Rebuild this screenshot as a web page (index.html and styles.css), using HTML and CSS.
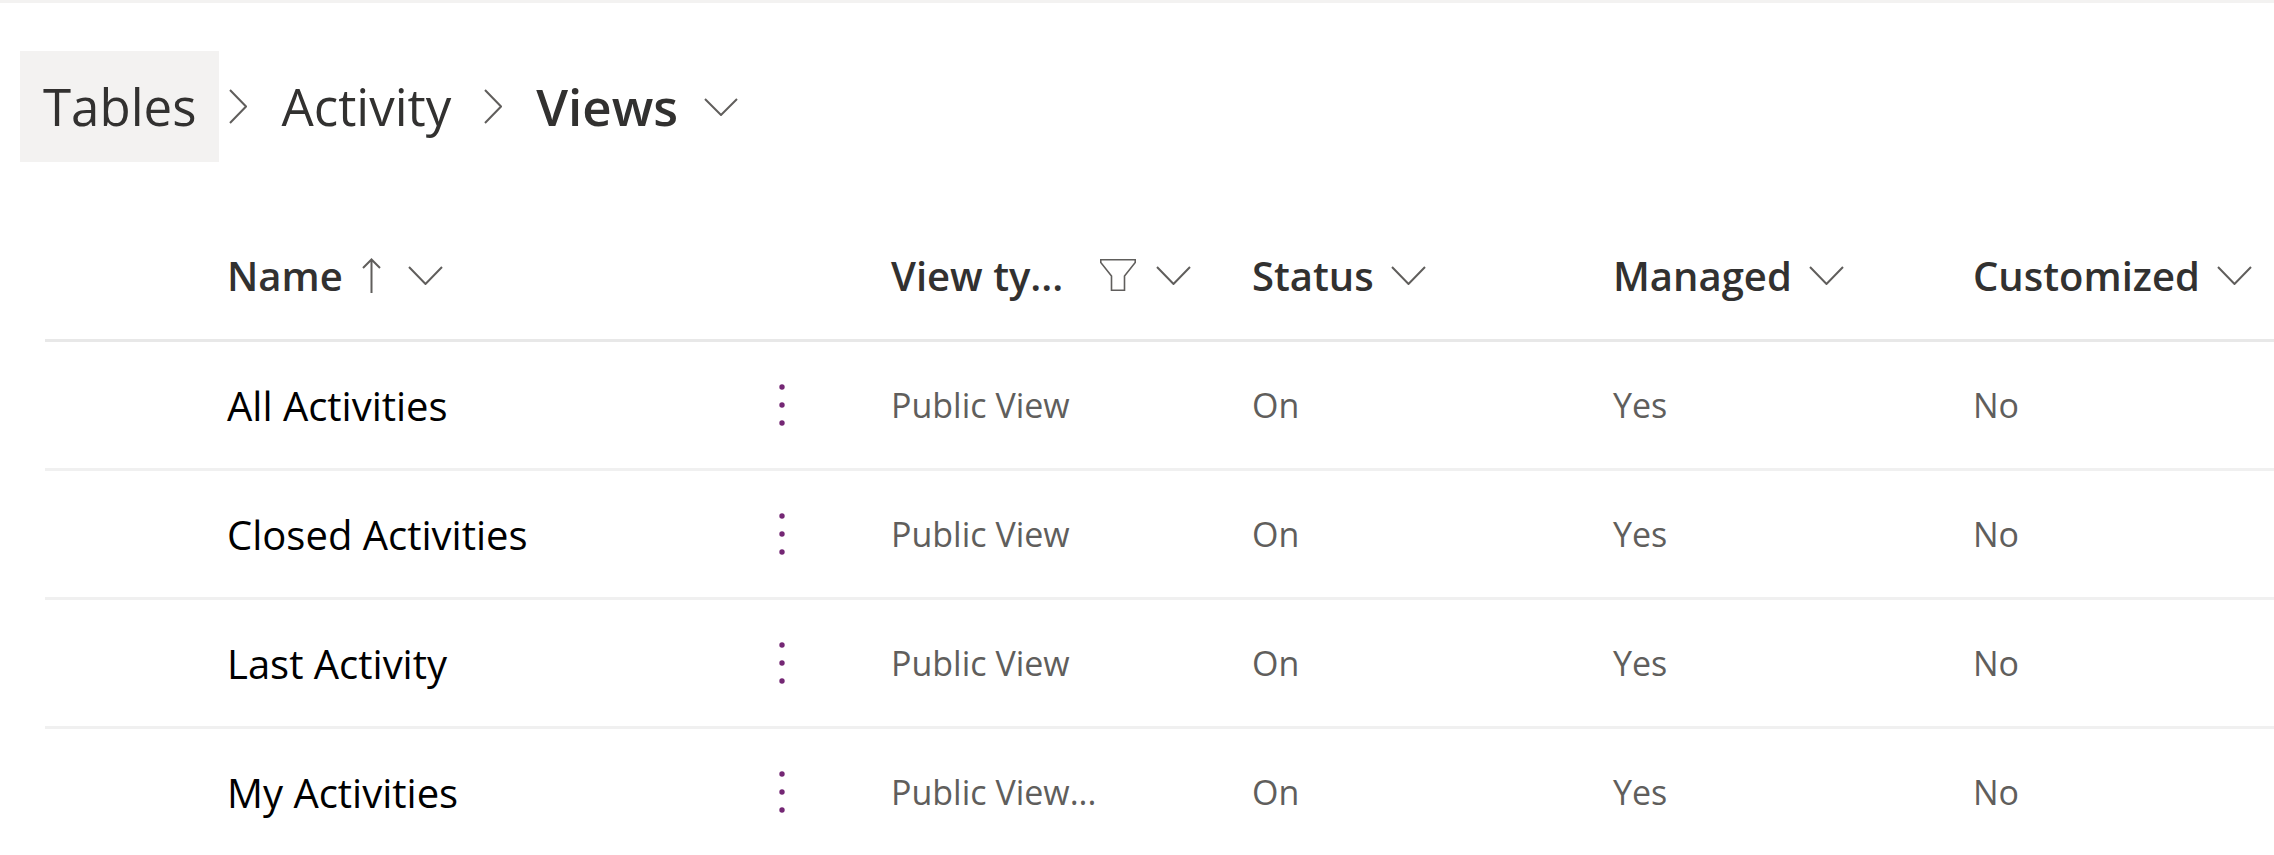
FILE: index.html
```html
<!DOCTYPE html>
<html lang="en">
<head>
<meta charset="utf-8">
<title>Views</title>
<link rel="stylesheet" href="styles.css">
</head>
<body>
<div class="topbar"></div>
<nav class="crumbs">
  <span class="crumb crumb-home">Tables</span>
  <svg class="sep" viewBox="0 0 18 35"><path d="M1 1 L17 17.5 L1 34"/></svg>
  <span class="crumb">Activity</span>
  <svg class="sep" viewBox="0 0 18 35"><path d="M1 1 L17 17.5 L1 34"/></svg>
  <span class="crumb current">Views</span>
  <svg class="caret" viewBox="0 0 34 18"><path d="M1 1 L17 17 L33 1"/></svg>
</nav>

<div class="table">
  <div class="row head">
    <div class="cell"></div>
    <div class="cell">
      <span>Name</span>
      <svg class="sort" viewBox="0 0 19 35"><path d="M9.5 35 V1.5 M1 10 L9.5 1.5 L18 10"/></svg>
      <svg class="chev chev-name" viewBox="0 0 35 19"><path d="M1 1 L17.5 18 L34 1"/></svg>
    </div>
    <div class="cell">
      <span class="trunc">View ty...</span>
      <svg class="filter" viewBox="0 0 36 32"><path d="M0.75 0.75 H35.25 V3.5 L24.5 17 V31.25 H11.5 V17 L0.75 3.5 Z"/></svg>
      <svg class="chev chev-filter" viewBox="0 0 35 19"><path d="M1 1 L17.5 18 L34 1"/></svg>
    </div>
    <div class="cell">
      <span>Status</span>
      <svg class="chev" viewBox="0 0 35 19"><path d="M1 1 L17.5 18 L34 1"/></svg>
    </div>
    <div class="cell">
      <span>Managed</span>
      <svg class="chev" viewBox="0 0 35 19"><path d="M1 1 L17.5 18 L34 1"/></svg>
    </div>
    <div class="cell">
      <span>Customized</span>
      <svg class="chev" viewBox="0 0 35 19"><path d="M1 1 L17.5 18 L34 1"/></svg>
    </div>
  </div>

  <div class="row">
    <div class="cell"></div>
    <div class="cell"><span class="name">All Activities</span><svg class="more" viewBox="0 0 20 44"><circle cx="10" cy="4" r="2.7"/><circle cx="10" cy="22" r="2.7"/><circle cx="10" cy="40" r="2.7"/></svg></div>
    <div class="cell data">Public View</div>
    <div class="cell data">On</div>
    <div class="cell data">Yes</div>
    <div class="cell data">No</div>
  </div>

  <div class="row">
    <div class="cell"></div>
    <div class="cell"><span class="name">Closed Activities</span><svg class="more" viewBox="0 0 20 44"><circle cx="10" cy="4" r="2.7"/><circle cx="10" cy="22" r="2.7"/><circle cx="10" cy="40" r="2.7"/></svg></div>
    <div class="cell data">Public View</div>
    <div class="cell data">On</div>
    <div class="cell data">Yes</div>
    <div class="cell data">No</div>
  </div>

  <div class="row">
    <div class="cell"></div>
    <div class="cell"><span class="name">Last Activity</span><svg class="more" viewBox="0 0 20 44"><circle cx="10" cy="4" r="2.7"/><circle cx="10" cy="22" r="2.7"/><circle cx="10" cy="40" r="2.7"/></svg></div>
    <div class="cell data">Public View</div>
    <div class="cell data">On</div>
    <div class="cell data">Yes</div>
    <div class="cell data">No</div>
  </div>

  <div class="row">
    <div class="cell"></div>
    <div class="cell"><span class="name">My Activities</span><svg class="more" viewBox="0 0 20 44"><circle cx="10" cy="4" r="2.7"/><circle cx="10" cy="22" r="2.7"/><circle cx="10" cy="40" r="2.7"/></svg></div>
    <div class="cell data">Public View...</div>
    <div class="cell data">On</div>
    <div class="cell data">Yes</div>
    <div class="cell data">No</div>
  </div>
</div>
</body>
</html>
```

FILE: styles.css
```css
html, body {
  margin: 0;
  padding: 0;
  background: #ffffff;
  overflow: hidden;
}

body {
  font-family: "Segoe UI", "Open Sans", sans-serif;
  color: #323130;
}

.topbar {
  height: 3px;
  background: #f3f2f1;
}

/* Breadcrumb */
.crumbs {
  display: flex;
  align-items: center;
  height: 111px;
  margin: 48px 0 0 20px;
}

.crumb {
  display: flex;
  align-items: center;
  height: 111px;
  padding: 0 23px;
  font-size: 51px;
  line-height: 1;
  color: #323130;
  white-space: nowrap;
}

.crumb-home {
  background: #f3f2f1;
}

.crumb.current {
  font-weight: 600;
}

.sep {
  width: 18px;
  height: 35px;
  margin: 0 11px 0 10px;
  flex: none;
}

.caret {
  width: 34px;
  height: 18px;
  margin-left: 3px;
  flex: none;
}

.sep path,
.caret path,
.chev path,
.sort path {
  fill: none;
  stroke: #605e5c;
  stroke-width: 2;
}

.filter path {
  fill: none;
  stroke: #605e5c;
  stroke-width: 1.6;
}

/* Table */
.table {
  margin: 49px 0 0 45px;
}

.row {
  display: grid;
  grid-template-columns: 182px 664px 361px 361px 360px 1fr;
  height: 126px;
  border-bottom: 3px solid #f0f0f0;
}

.row.head {
  height: 128px;
  border-bottom-color: #e8e8e8;
}

.cell {
  display: flex;
  align-items: center;
  min-width: 0;
  white-space: nowrap;
}

.head .cell {
  font-size: 40px;
  font-weight: 600;
  color: #323130;
}

.sort {
  width: 19px;
  height: 35px;
  margin-left: 19px;
  flex: none;
}

.chev {
  width: 35px;
  height: 19px;
  margin-left: 17px;
  flex: none;
}

.chev-name {
  margin-left: 27px;
}

.trunc {
  width: 209px;
}

.filter {
  width: 36px;
  height: 32px;
  flex: none;
}

.chev-filter {
  margin-left: 20px;
}

.name {
  flex: 1;
  font-size: 40px;
  color: #000000;
}

.more {
  width: 20px;
  height: 44px;
  margin-right: 99px;
  flex: none;
}

.more circle {
  fill: #742774;
}

.data {
  font-size: 34px;
  color: #605e5c;
}
```
